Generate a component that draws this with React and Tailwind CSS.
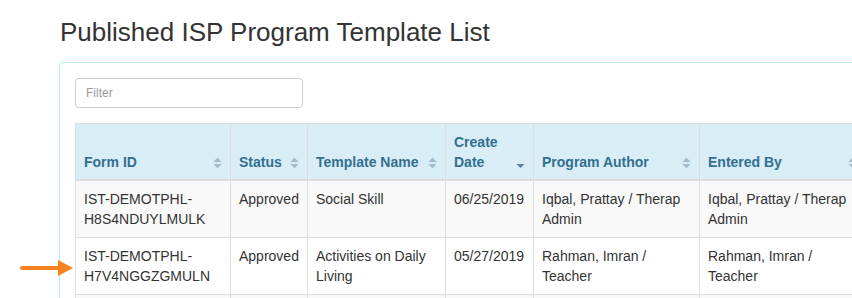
import React from "react";

const columns = [
  { label: "Form ID", width: 155, sort: "both" },
  { label: "Status", width: 77, sort: "both" },
  { label: "Template Name", width: 138, sort: "both" },
  { label: ["Create", "Date"], width: 88, sort: "desc" },
  { label: "Program Author", width: 166, sort: "both" },
  { label: "Entered By", width: 166, sort: "both" },
];

const rows = [
  {
    id: ["IST-DEMOTPHL-", "H8S4NDUYLMULK"],
    status: "Approved",
    name: "Social Skill",
    date: "06/25/2019",
    author: "Iqbal, Prattay / Therap Admin",
    entered: "Iqbal, Prattay / Therap Admin",
  },
  {
    id: ["IST-DEMOTPHL-", "H7V4NGGZGMULN"],
    status: "Approved",
    name: "Activities on Daily Living",
    date: "05/27/2019",
    author: "Rahman, Imran / Teacher",
    entered: "Rahman, Imran / Teacher",
  },
];

const SortIcon = ({ sort }) => (
  <svg width="9" height="12" viewBox="0 0 9 12" className="shrink-0 mb-[3px]">
    {sort === "both" ? (
      <>
        <path d="M4.5 0.5 L8.5 5 L0.5 5 Z" fill="#a3bccb" />
        <path d="M0.5 7 L8.5 7 L4.5 11.5 Z" fill="#a3bccb" />
      </>
    ) : (
      <path d="M0.5 7 L8.5 7 L4.5 11 Z" fill="#5b8198" />
    )}
  </svg>
);

export default function App() {
  return (
    <div
      className="relative w-[852px] h-[298px] overflow-hidden bg-white text-[#333]"
      style={{ fontFamily: '"Liberation Sans", Arial, sans-serif' }}
    >
      <h1 className="pl-[60px] pt-[15px] text-[26px] leading-[34px] font-normal text-[#333]">
        Published ISP Program Template List
      </h1>

      <div className="ml-[59px] mt-[13px] w-[900px] border border-[#bce8f1] rounded-[4px] p-[15px]">
        <div className="flex items-center">
          <input
            placeholder="Filter"
            className="w-[228px] h-[30px] border border-[#ccc] rounded-[4px] px-[10px] text-[12px] placeholder:text-[#999] outline-none"
          />
          <div className="ml-auto mr-[33px] h-[30px] w-[20px] border border-[#ccc] rounded-l-[4px]" />
        </div>

        <table className="mt-[15px] border-collapse table-fixed text-[14px] leading-[20px]">
          <colgroup>
            {columns.map((c, i) => (
              <col key={i} style={{ width: c.width }} />
            ))}
          </colgroup>
          <thead>
            <tr className="bg-[#d9edf7]">
              {columns.map((c, i) => (
                <th
                  key={i}
                  className="border border-[#ddd] border-b-2 px-[8px] pt-[8px] pb-[7px] align-bottom text-left font-bold text-[#31708f]"
                >
                  <div className="flex items-end justify-between gap-1">
                    <span>
                      {Array.isArray(c.label)
                        ? c.label.map((l) => <div key={l}>{l}</div>)
                        : c.label}
                    </span>
                    <SortIcon sort={c.sort} />
                  </div>
                </th>
              ))}
            </tr>
          </thead>
          <tbody>
            {rows.map((r, i) => (
              <tr key={i} className={i % 2 === 0 ? "bg-[#f9f9f9]" : "bg-white"}>
                <td className="border border-[#ddd] p-[8px] align-top">
                  {r.id.map((l) => (
                    <div key={l}>{l}</div>
                  ))}
                </td>
                <td className="border border-[#ddd] p-[8px] align-top">{r.status}</td>
                <td className="border border-[#ddd] p-[8px] align-top">{r.name}</td>
                <td className="border border-[#ddd] p-[8px] align-top">{r.date}</td>
                <td className="border border-[#ddd] p-[8px] align-top">{r.author}</td>
                <td className="border border-[#ddd] p-[8px] align-top">{r.entered}</td>
              </tr>
            ))}
            <tr className="bg-[#f9f9f9]">
              {columns.map((c, i) => (
                <td key={i} className="border border-[#ddd] p-[8px] h-[40px]" />
              ))}
            </tr>
          </tbody>
        </table>
      </div>

      {/* pointer arrow next to the second row */}
      <svg
        width="60"
        height="20"
        viewBox="0 0 60 20"
        className="absolute left-[18px] top-[258px]"
      >
        <line x1="4" y1="10" x2="42" y2="10" stroke="#f5821f" strokeWidth="4" strokeLinecap="round" />
        <path d="M40 2 L55 10 L40 18 Z" fill="#f5821f" />
      </svg>
    </div>
  );
}
